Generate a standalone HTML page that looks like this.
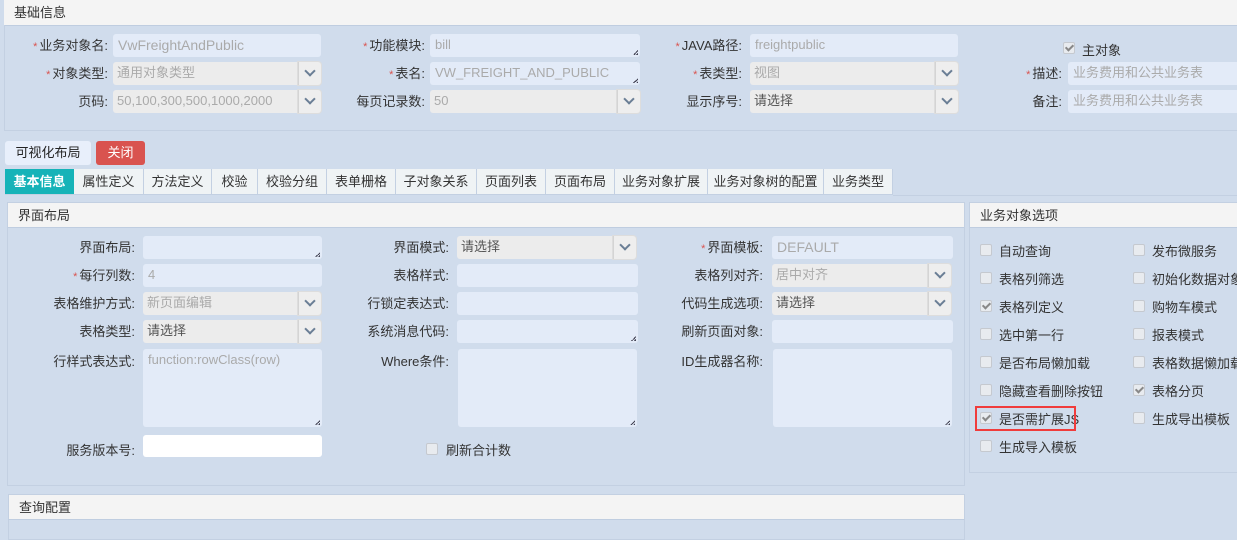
<!DOCTYPE html>
<html><head><meta charset="utf-8"><style>
*{box-sizing:border-box;margin:0;padding:0}
body{width:1237px;height:530px;overflow:hidden;background:#d0dcec;font-family:"Liberation Sans","Noto Sans CJK SC",sans-serif;font-size:13px;color:#333;position:relative}
.a{position:absolute}
.hdr{position:absolute;background:#f4f4f4;border-bottom:1px solid #bfcde0;font-size:13px;padding-left:10px;line-height:25px;color:#333}
.box{position:absolute;border:1px solid #c3d0e2}
.lb{position:absolute;text-align:right;line-height:23px;white-space:nowrap}
.lb i{color:#d9534f;font-style:normal;font-size:11px;margin-right:2px}
.in{position:absolute;height:23px;background:#e3ebf8;border-radius:3px;color:#aaa;padding-left:5px;line-height:22px;font-size:13px;white-space:nowrap;overflow:hidden}
.sel{position:absolute;height:23px;background:#ececec;border-radius:3px;color:#aaa;padding-left:4px;line-height:22px;white-space:nowrap}
.sel.d{color:#555}
.sel b{position:absolute;right:0;top:0;width:23px;height:23px;border-left:1px solid #d4d4d4;background:#eee;border-radius:0 3px 3px 0;box-shadow:0 0 0 1px #ddd}
.sel b:after{content:"";position:absolute;left:7px;top:5px;width:6px;height:6px;border-right:2px solid #6a7e95;border-bottom:2px solid #6a7e95;transform:rotate(45deg)}
.rz:after{content:"";position:absolute;right:2px;bottom:2px;width:5px;height:5px;background:linear-gradient(135deg,transparent 50%,#445 50%,#445 65%,transparent 65%,transparent 80%,#445 80%)}
.cb{position:absolute;width:12px;height:12px;border:1px solid #c5c9cf;border-radius:2px;background:#e8ebef}
.cb.k:after{content:"";position:absolute;left:3px;top:0px;width:3px;height:6px;border-right:2px solid #888;border-bottom:2px solid #888;transform:rotate(45deg)}
.ct{position:absolute;line-height:16px;white-space:nowrap}
.tab{position:absolute;top:169px;height:26px;background:#eff3f5;border-right:1px solid #c3d0e2;border-bottom:1px solid #c3d0e2;line-height:26px;text-align:center;white-space:nowrap}
</style></head><body>
<div class="hdr" style="left:4px;top:0;width:1233px;height:26px">基础信息</div>
<div class="box" style="left:4px;top:25px;width:1240px;height:106px;border-top:none"></div>
<div class="lb" style="left:0;width:108px;top:34px"><i>*</i>业务对象名:</div>
<div class="in" style="left:113px;top:34px;width:208px;font-size:14px">VwFreightAndPublic</div>
<div class="lb" style="left:0;width:108px;top:62px"><i>*</i>对象类型:</div>
<div class="sel" style="left:113px;top:62px;width:208px">通用对象类型<b></b></div>
<div class="lb" style="left:0;width:108px;top:90px">页码:</div>
<div class="sel" style="left:113px;top:90px;width:208px">50,100,300,500,1000,2000<b></b></div>

<div class="lb" style="left:300px;width:125px;top:34px"><i>*</i>功能模块:</div>
<div class="in rz" style="left:430px;top:34px;width:210px">bill</div>
<div class="lb" style="left:300px;width:125px;top:62px"><i>*</i>表名:</div>
<div class="in rz" style="left:430px;top:62px;width:210px">VW_FREIGHT_AND_PUBLIC</div>
<div class="lb" style="left:300px;width:125px;top:90px">每页记录数:</div>
<div class="sel" style="left:430px;top:90px;width:210px">50<b></b></div>

<div class="lb" style="left:600px;width:142px;top:34px"><i>*</i>JAVA路径:</div>
<div class="in" style="left:750px;top:34px;width:208px">freightpublic</div>
<div class="lb" style="left:600px;width:142px;top:62px"><i>*</i>表类型:</div>
<div class="sel" style="left:750px;top:62px;width:208px">视图<b></b></div>
<div class="lb" style="left:600px;width:142px;top:90px">显示序号:</div>
<div class="sel d" style="left:750px;top:90px;width:208px">请选择<b></b></div>

<div class="cb k" style="left:1063px;top:42px"></div>
<div class="ct" style="left:1082px;top:43px">主对象</div>
<div class="lb" style="left:1000px;width:62px;top:62px"><i>*</i>描述:</div>
<div class="in" style="left:1068px;top:62px;width:180px">业务费用和公共业务表</div>
<div class="lb" style="left:1000px;width:62px;top:90px">备注:</div>
<div class="in" style="left:1068px;top:90px;width:180px">业务费用和公共业务表</div>

<div class="a" style="left:5px;top:141px;width:86px;height:24px;background:#e8effb;border-radius:3px;text-align:center;line-height:24px;color:#222">可视化布局</div>
<div class="a" style="left:96px;top:141px;width:49px;height:24px;background:#d9534f;border-radius:3px;text-align:center;line-height:24px;color:#fff">关闭</div>

<div class="tab" style="left:5px;width:69px;background:#16b3b8;color:#fff;font-weight:bold;border-right:none">基本信息</div>
<div class="tab" style="left:74px;width:70px">属性定义</div>
<div class="tab" style="left:144px;width:68px">方法定义</div>
<div class="tab" style="left:212px;width:46px">校验</div>
<div class="tab" style="left:258px;width:69px">校验分组</div>
<div class="tab" style="left:327px;width:69px">表单栅格</div>
<div class="tab" style="left:396px;width:81px">子对象关系</div>
<div class="tab" style="left:477px;width:69px">页面列表</div>
<div class="tab" style="left:546px;width:69px">页面布局</div>
<div class="tab" style="left:615px;width:93px">业务对象扩展</div>
<div class="tab" style="left:708px;width:116px">业务对象树的配置</div>
<div class="tab" style="left:824px;width:69px">业务类型</div>
<div class="a" style="left:893px;top:195px;width:344px;height:1px;background:#c3d0e2"></div>

<div class="hdr" style="left:7px;top:202px;width:958px;height:26px;border-top:1px solid #c3d0e2;border-left:1px solid #c3d0e2;border-right:1px solid #c3d0e2">界面布局</div>
<div class="box" style="left:7px;top:227px;width:958px;height:259px;border-top:none"></div>
<div class="lb" style="left:0;width:135px;top:236px">界面布局:</div>
<div class="in rz" style="left:143px;top:236px;width:179px"></div>
<div class="lb" style="left:0;width:135px;top:264px"><i>*</i>每行列数:</div>
<div class="in" style="left:143px;top:264px;width:179px">4</div>
<div class="lb" style="left:0;width:135px;top:292px">表格维护方式:</div>
<div class="sel" style="left:143px;top:292px;width:178px">新页面编辑<b></b></div>
<div class="lb" style="left:0;width:135px;top:320px">表格类型:</div>
<div class="sel d" style="left:143px;top:320px;width:178px">请选择<b></b></div>
<div class="lb" style="left:0;width:135px;top:350px">行样式表达式:</div>
<div class="in rz" style="left:143px;top:349px;width:179px;height:78px;font-size:13px">function:rowClass(row)</div>
<div class="lb" style="left:0;width:135px;top:439px">服务版本号:</div>
<div class="in" style="left:143px;top:435px;width:179px;height:22px;background:#fff"></div>

<div class="lb" style="left:300px;width:149px;top:236px">界面模式:</div>
<div class="sel d" style="left:457px;top:236px;width:179px">请选择<b></b></div>
<div class="lb" style="left:300px;width:149px;top:264px">表格样式:</div>
<div class="in" style="left:457px;top:264px;width:181px"></div>
<div class="lb" style="left:300px;width:149px;top:292px">行锁定表达式:</div>
<div class="in" style="left:457px;top:292px;width:181px"></div>
<div class="lb" style="left:300px;width:149px;top:320px">系统消息代码:</div>
<div class="in rz" style="left:457px;top:320px;width:181px"></div>
<div class="lb" style="left:300px;width:149px;top:350px">Where条件:</div>
<div class="in rz" style="left:458px;top:349px;width:179px;height:78px"></div>
<div class="cb" style="left:426px;top:443px"></div>
<div class="ct" style="left:446px;top:443px">刷新合计数</div>

<div class="lb" style="left:600px;width:163px;top:236px"><i>*</i>界面模板:</div>
<div class="in" style="left:772px;top:236px;width:181px;font-size:14px">DEFAULT</div>
<div class="lb" style="left:600px;width:163px;top:264px">表格列对齐:</div>
<div class="sel" style="left:772px;top:264px;width:179px">居中对齐<b></b></div>
<div class="lb" style="left:600px;width:163px;top:292px">代码生成选项:</div>
<div class="sel d" style="left:772px;top:292px;width:179px">请选择<b></b></div>
<div class="lb" style="left:600px;width:163px;top:320px">刷新页面对象:</div>
<div class="in" style="left:772px;top:320px;width:181px"></div>
<div class="lb" style="left:600px;width:163px;top:350px">ID生成器名称:</div>
<div class="in rz" style="left:773px;top:349px;width:179px;height:78px"></div>

<div class="hdr" style="left:8px;top:494px;width:957px;height:26px;border-top:1px solid #c3d0e2;border-left:1px solid #c3d0e2;border-right:1px solid #c3d0e2">查询配置</div>
<div class="box" style="left:8px;top:520px;width:957px;height:20px;border-top:none"></div>

<div class="hdr" style="left:969px;top:202px;width:270px;height:26px;border-top:1px solid #c3d0e2;border-left:1px solid #c3d0e2">业务对象选项</div>
<div class="box" style="left:969px;top:227px;width:280px;height:246px;border-top:none"></div>
<div class="cb" style="left:980px;top:244px"></div><div class="ct" style="left:999px;top:244px">自动查询</div>
<div class="cb" style="left:980px;top:272px"></div><div class="ct" style="left:999px;top:272px">表格列筛选</div>
<div class="cb k" style="left:980px;top:300px"></div><div class="ct" style="left:999px;top:300px">表格列定义</div>
<div class="cb" style="left:980px;top:328px"></div><div class="ct" style="left:999px;top:328px">选中第一行</div>
<div class="cb" style="left:980px;top:356px"></div><div class="ct" style="left:999px;top:356px">是否布局懒加载</div>
<div class="cb" style="left:980px;top:384px"></div><div class="ct" style="left:999px;top:384px">隐藏查看删除按钮</div>
<div class="cb k" style="left:980px;top:412px"></div><div class="ct" style="left:999px;top:412px">是否需扩展JS</div>
<div class="a" style="left:975px;top:406px;width:101px;height:25px;border:2px solid #f03c3c"></div>
<div class="cb" style="left:980px;top:440px"></div><div class="ct" style="left:999px;top:440px">生成导入模板</div>
<div class="cb" style="left:1133px;top:244px"></div><div class="ct" style="left:1152px;top:244px">发布微服务</div>
<div class="cb" style="left:1133px;top:272px"></div><div class="ct" style="left:1152px;top:272px">初始化数据对象</div>
<div class="cb" style="left:1133px;top:300px"></div><div class="ct" style="left:1152px;top:300px">购物车模式</div>
<div class="cb" style="left:1133px;top:328px"></div><div class="ct" style="left:1152px;top:328px">报表模式</div>
<div class="cb" style="left:1133px;top:356px"></div><div class="ct" style="left:1152px;top:356px">表格数据懒加载</div>
<div class="cb k" style="left:1133px;top:384px"></div><div class="ct" style="left:1152px;top:384px">表格分页</div>
<div class="cb" style="left:1133px;top:412px"></div><div class="ct" style="left:1152px;top:412px">生成导出模板</div>
</body></html>
